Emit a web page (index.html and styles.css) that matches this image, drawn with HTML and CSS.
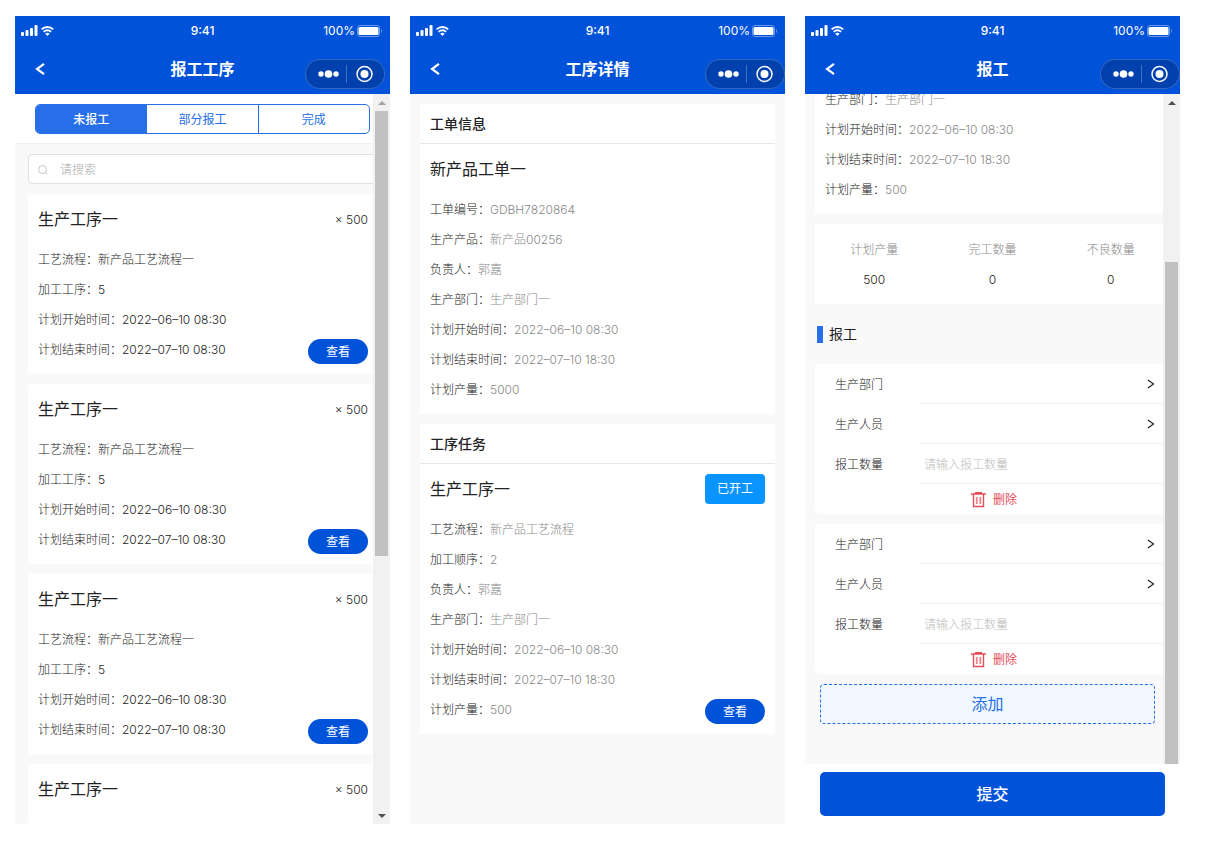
FILE: index.html
```
<!DOCTYPE html>
<html lang="zh-CN">
<head>
    <meta charset="UTF-8">
    <meta name="viewport" content="width=device-width, initial-scale=1.0">
    <title>报工</title>
    <link rel="stylesheet" href="styles.css">
</head>
<body>

    <svg class="sprite" aria-hidden="true">
        <symbol id="signal" viewBox="0 0 34 12">
            <rect x="0" y="7" width="3" height="4" rx="1"/>
            <rect x="4.500" y="5" width="3" height="6" rx="1"/>
            <rect x="9" y="3" width="3" height="8" rx="1"/>
            <rect x="13.500" y="0" width="3" height="11" rx="1"/>
            <g fill="none" stroke="currentColor" stroke-width="1.800">
                <path d="M20.600 4.400a8.200 8.200 0 0 1 11.600 0"/>
                <path d="M22.700 6.800a5.200 5.200 0 0 1 7.400 0"/>
            </g>
            <path d="M24.200 8.700a3.200 3.200 0 0 1 4.400 0L26.400 11z"/>
        </symbol>
        <symbol id="battery" viewBox="0 0 27 12">
            <rect x=".5" y=".5" width="22" height="11" rx="2.500" fill="none" stroke="currentColor" stroke-opacity=".4"/>
            <rect x="1.500" y="2" width="20" height="8" rx="1.500"/>
            <path d="M24 4c1.400.5 1.400 3.500 0 4z" fill-opacity=".4"/>
        </symbol>
        <symbol id="back" viewBox="0 0 10 14">
            <path d="M9 1.800 2 7l7 5.200" fill="none" stroke="currentColor" stroke-width="2.200"/>
        </symbol>
        <symbol id="capsule" viewBox="0 0 80 30">
            <circle cx="16" cy="15" r="2.700"/>
            <circle cx="23.500" cy="15" r="3.800"/>
            <circle cx="31" cy="15" r="2.700"/>
            <path d="M41.500 6v18" stroke="currentColor" stroke-opacity=".25"/>
            <circle cx="59.500" cy="15" r="7.500" fill="none" stroke="currentColor" stroke-width="1.500"/>
            <circle cx="59.500" cy="15" r="4"/>
        </symbol>
        <symbol id="next" viewBox="0 0 8 10">
            <path d="M1 1l5.500 4L1 9" fill="none" stroke="currentColor" stroke-width="1.200"/>
        </symbol>
        <symbol id="trash" viewBox="0 0 15 16">
            <path d="M0 2h15M4 .7h7" fill="none" stroke="currentColor" stroke-width="1.400"/>
            <path d="M2.500 2v12.500h10V2" fill="none" stroke="currentColor" stroke-width="1.400"/>
            <path d="M5.700 5v7M9.300 5v7" fill="none" stroke="currentColor" stroke-opacity=".7" stroke-width="1.800"/>
        </symbol>
    </svg>

    <main class="screens">

        <!-- process list -->
        <section class="phone">
            <header class="top top-inset">
                <div class="status">
                    <svg class="signal"><use href="#signal"/></svg>
                    <span class="clock">9:41</span>
                    <span class="power">100%<svg class="battery"><use href="#battery"/></svg></span>
                </div>
                <div class="nav">
                    <button type="button" class="back" aria-label="返回"><svg><use href="#back"/></svg></button>
                    <h1>报工工序</h1>
                    <button type="button" class="capsule" aria-label="菜单"><svg><use href="#capsule"/></svg></button>
                </div>
            </header>
            <div class="content">
                <div class="tabs-bar">
                    <div class="tabs">
                        <button type="button" class="tab active">未报工</button>
                        <button type="button" class="tab">部分报工</button>
                        <button type="button" class="tab">完成</button>
                    </div>
                </div>
                <div class="list">
                    <label class="search">
                        <svg viewBox="0 0 12 12"><circle cx="5.500" cy="5.500" r="4.800"/><path d="M9 9l2.500 2.500"/></svg>
                        <input type="search" placeholder="请搜索" aria-label="请搜索">
                    </label>
                    <article class="card rounded">
                        <div class="card-title"><h2>生产工序一</h2><span class="count">× 500</span></div>
                        <p>工艺流程：新产品工艺流程一</p>
                        <p>加工工序：5</p>
                        <p>计划开始时间：2022–06–10 08:30</p>
                        <div class="last"><p>计划结束时间：2022–07–10 08:30</p><button type="button" class="view">查看</button></div>
                    </article>
                    <article class="card rounded">
                        <div class="card-title"><h2>生产工序一</h2><span class="count">× 500</span></div>
                        <p>工艺流程：新产品工艺流程一</p>
                        <p>加工工序：5</p>
                        <p>计划开始时间：2022–06–10 08:30</p>
                        <div class="last"><p>计划结束时间：2022–07–10 08:30</p><button type="button" class="view">查看</button></div>
                    </article>
                    <article class="card rounded">
                        <div class="card-title"><h2>生产工序一</h2><span class="count">× 500</span></div>
                        <p>工艺流程：新产品工艺流程一</p>
                        <p>加工工序：5</p>
                        <p>计划开始时间：2022–06–10 08:30</p>
                        <div class="last"><p>计划结束时间：2022–07–10 08:30</p><button type="button" class="view">查看</button></div>
                    </article>
                    <article class="card rounded">
                        <div class="card-title"><h2>生产工序一</h2><span class="count">× 500</span></div>
                    </article>
                </div>
                <div class="scrollbar at-top"><i class="arrow up"></i><i class="thumb"></i><i class="arrow down"></i></div>
            </div>
        </section>

        <!-- process detail -->
        <section class="phone">
            <header class="top">
                <div class="status">
                    <svg class="signal"><use href="#signal"/></svg>
                    <span class="clock">9:41</span>
                    <span class="power">100%<svg class="battery"><use href="#battery"/></svg></span>
                </div>
                <div class="nav">
                    <button type="button" class="back" aria-label="返回"><svg><use href="#back"/></svg></button>
                    <h1>工序详情</h1>
                    <button type="button" class="capsule" aria-label="菜单"><svg><use href="#capsule"/></svg></button>
                </div>
            </header>
            <div class="content detail">
                <article>
                    <h3 class="card-head">工单信息</h3>
                    <div class="card">
                        <div class="card-title"><h2>新产品工单一</h2></div>
                        <p>工单编号：<span>GDBH7820864</span></p>
                        <p>生产产品：<span>新产品00256</span></p>
                        <p>负责人：<span>郭嘉</span></p>
                        <p>生产部门：<span>生产部门一</span></p>
                        <p>计划开始时间：<span>2022–06–10 08:30</span></p>
                        <p>计划结束时间：<span>2022–07–10 18:30</span></p>
                        <p>计划产量：<span>5000</span></p>
                    </div>
                </article>
                <article>
                    <h3 class="card-head">工序任务</h3>
                    <div class="card">
                        <div class="card-title"><h2>生产工序一</h2><span class="badge">已开工</span></div>
                        <p>工艺流程：<span>新产品工艺流程</span></p>
                        <p>加工顺序：<span>2</span></p>
                        <p>负责人：<span>郭嘉</span></p>
                        <p>生产部门：<span>生产部门一</span></p>
                        <p>计划开始时间：<span>2022–06–10 08:30</span></p>
                        <p>计划结束时间：<span>2022–07–10 18:30</span></p>
                        <div class="last"><p>计划产量：<span>500</span></p><button type="button" class="view">查看</button></div>
                    </div>
                </article>
            </div>
        </section>

        <!-- report form -->
        <section class="phone">
            <header class="top">
                <div class="status">
                    <svg class="signal"><use href="#signal"/></svg>
                    <span class="clock">9:41</span>
                    <span class="power">100%<svg class="battery"><use href="#battery"/></svg></span>
                </div>
                <div class="nav">
                    <button type="button" class="back" aria-label="返回"><svg><use href="#back"/></svg></button>
                    <h1>报工</h1>
                    <button type="button" class="capsule" aria-label="菜单"><svg><use href="#capsule"/></svg></button>
                </div>
            </header>
            <form class="report">
                <div class="content">
                    <div class="report-body">
                        <div class="card scrolled">
                            <p>生产部门：<span>生产部门一</span></p>
                            <p>计划开始时间：<span>2022–06–10 08:30</span></p>
                            <p>计划结束时间：<span>2022–07–10 18:30</span></p>
                            <p>计划产量：<span>500</span></p>
                        </div>
                        <dl class="stats">
                            <div><dt>计划产量</dt><dd>500</dd></div>
                            <div><dt>完工数量</dt><dd>0</dd></div>
                            <div><dt>不良数量</dt><dd>0</dd></div>
                        </dl>
                        <h3 class="group-title">报工</h3>
                        <div class="fields">
                            <div class="field">
                                <label for="dept1">生产部门</label>
                                <div class="control"><select id="dept1"><option></option></select><svg class="next"><use href="#next"/></svg></div>
                            </div>
                            <div class="field">
                                <label for="staff1">生产人员</label>
                                <div class="control"><select id="staff1"><option></option></select><svg class="next"><use href="#next"/></svg></div>
                            </div>
                            <div class="field">
                                <label for="qty1">报工数量</label>
                                <div class="control"><input type="text" id="qty1" placeholder="请输入报工数量"></div>
                            </div>
                            <button type="button" class="delete"><svg><use href="#trash"/></svg>删除</button>
                        </div>
                        <div class="fields">
                            <div class="field">
                                <label for="dept2">生产部门</label>
                                <div class="control"><select id="dept2"><option></option></select><svg class="next"><use href="#next"/></svg></div>
                            </div>
                            <div class="field">
                                <label for="staff2">生产人员</label>
                                <div class="control"><select id="staff2"><option></option></select><svg class="next"><use href="#next"/></svg></div>
                            </div>
                            <div class="field">
                                <label for="qty2">报工数量</label>
                                <div class="control"><input type="text" id="qty2" placeholder="请输入报工数量"></div>
                            </div>
                            <button type="button" class="delete"><svg><use href="#trash"/></svg>删除</button>
                        </div>
                        <button type="button" class="add">添加</button>
                    </div>
                    <div class="scrollbar at-bottom"><i class="arrow up"></i><i class="thumb"></i></div>
                </div>
                <div class="footer">
                    <button type="submit" class="submit">提交</button>
                </div>
            </form>
        </section>

    </main>

</body>
</html>
```

FILE: styles.css
```
* {
    box-sizing: border-box;
}
body {
    margin: 0;
    background-color: #fff;
    color: #222;
    font-family: Inter, "Noto Sans CJK SC", sans-serif;
    font-size: 12px;
    font-weight: 300;
    line-height: 30px;
}
h1, h2, h3, p, dl, dd {
    margin: 0;
}
button, input, select {
    font: inherit;
    color: inherit;
    border: none;
    background: none;
    padding: 0;
    margin: 0;
}
button {
    cursor: pointer;
}
svg {
    display: block;
    fill: currentColor;
}
.sprite {
    display: none;
}

.screens {
    display: grid;
    grid-template-columns: repeat(3, 1fr);
    gap: 20px;
    height: 100vh;
    padding: 16px 25px 20px 15px;
}
.phone {
    display: flex;
    flex-direction: column;
    min-height: 0;
    overflow: hidden;
}

/* header */
.top {
    flex: none;
    background-color: #0052d9;
    color: #fff;
}
.status {
    display: grid;
    grid-template-columns: 1fr auto 1fr;
    align-items: center;
    height: 28px;
    padding: 0 6px;
    font-weight: 400;
}
.signal {
    width: 34px;
    height: 12px;
}
.clock {
    font-weight: 500;
}
.power {
    display: flex;
    align-items: center;
    justify-content: flex-end;
    gap: 2px;
}
.battery {
    width: 27px;
    height: 12px;
}
.nav {
    display: grid;
    grid-template-columns: 1fr auto 1fr;
    align-items: center;
    height: 50px;
    padding-left: 20px;
}
.nav h1 {
    padding-right: 20px;
    font-size: 16px;
    font-weight: 700;
}
.back {
    width: 40px;
}
.back svg {
    width: 10px;
    height: 14px;
}
.capsule {
    justify-self: end;
    margin-top: 10px;
    width: 80px;
    height: 30px;
    border: 1px solid rgba(255, 255, 255, 0.2);
    border-radius: 15px;
    background-color: rgba(0, 0, 0, 0.2);
}
.capsule svg {
    width: 80px;
    height: 30px;
    margin: -1px;
}
.top-inset .capsule {
    margin-right: 5px;
}

/* content */
.content {
    position: relative;
    flex: 1;
    min-height: 0;
    overflow: hidden;
    background-color: #f9f9f9;
}
.card {
    padding: 10px 10px 9px;
    background-color: #fff;
}
.rounded {
    border-radius: 4px;
}
.card p span {
    color: #888;
}
.card-title {
    display: flex;
    justify-content: space-between;
    margin-bottom: 11px;
}
.card-title h2 {
    font-size: 16px;
    font-weight: 400;
}
.count {
    height: 30px;
    line-height: 32px;
}
.last {
    display: flex;
    justify-content: space-between;
    align-items: flex-end;
}
.view {
    width: 60px;
    height: 25px;
    margin-bottom: 1px;
    border-radius: 13px;
    background-color: #0052d9;
    color: #fff;
    font-weight: 400;
    line-height: 25px;
}
.badge {
    width: 60px;
    border-radius: 4px;
    background-color: #0a94ff;
    color: #fff;
    font-weight: 400;
    text-align: center;
}

/* tabs and list */
.tabs-bar {
    padding: 10px 20px 9px;
    border-bottom: 1px solid #eee;
    background-color: #fff;
}
.tabs {
    display: flex;
    overflow: hidden;
    border: 1px solid #266fe8;
    border-radius: 5px;
}
.tab {
    flex: 1;
    height: 28px;
    padding-top: 1px;
    color: #266fe8;
    font-weight: 400;
    line-height: 27px;
}
.tab + .tab {
    border-left: 1px solid #266fe8;
}
.tab.active {
    background-color: #266fe8;
    color: #fff;
    font-weight: 500;
}
.list {
    display: flex;
    flex-direction: column;
    gap: 10px;
    padding: 10px 12px 0 13px;
}
.search {
    display: flex;
    align-items: center;
    gap: 12px;
    height: 30px;
    padding: 1px 0 0 9px;
    border: 1px solid #e0e0e0;
    border-radius: 4px;
    background-color: #fff;
}
.search svg {
    width: 10px;
    height: 10px;
    fill: none;
    stroke: #bbb;
}
.search input {
    flex: 1;
    outline: none;
}
::placeholder {
    color: #aaa;
    opacity: 1;
}

/* detail */
.detail {
    display: flex;
    flex-direction: column;
    gap: 10px;
    padding: 10px;
}
.card-head {
    height: 40px;
    padding-left: 10px;
    border-bottom: 1px solid #e7e7e7;
    background-color: #fff;
    font-size: 14px;
    font-weight: 500;
    line-height: 40px;
}

/* report form */
.report {
    display: flex;
    flex-direction: column;
    flex: 1;
    min-height: 0;
}
.report-body {
    padding: 0 10px;
}
.scrolled {
    margin-top: -9px;
    padding-top: 0;
}
.stats {
    display: grid;
    grid-template-columns: repeat(3, 1fr);
    margin-top: 10px;
    padding: 11px 0 9px;
    background-color: #fff;
    text-align: center;
}
.stats dt {
    color: #888;
}
.group-title {
    display: flex;
    align-items: center;
    gap: 6px;
    height: 60px;
    padding-left: 2px;
    font-size: 14px;
    font-weight: 400;
}
.group-title::before {
    content: "";
    width: 6px;
    height: 17px;
    background-color: #266fe8;
}
.fields {
    margin-bottom: 10px;
    padding-left: 20px;
    border-radius: 5px;
    background-color: #fff;
}
.field {
    display: flex;
    height: 40px;
    line-height: 42px;
}
.field label {
    width: 85px;
}
.control {
    display: flex;
    align-items: center;
    flex: 1;
    padding: 1px 15px 0 4px;
    border-bottom: 1px solid #eee;
}
.control select, .control input {
    flex: 1;
    height: 38px;
    padding-top: 2px;
    appearance: none;
    outline: none;
}
.control ::placeholder {
    color: #bbb;
}
.next {
    width: 8px;
    height: 10px;
}
.delete {
    display: flex;
    align-items: center;
    gap: 7px;
    height: 30px;
    margin: 0 auto;
    padding: 2px 17px 0 0;
    color: #e34d59;
    font-weight: 400;
}
.delete svg {
    width: 15px;
    height: 16px;
}
.add {
    display: block;
    width: calc(100% - 20px);
    height: 40px;
    margin-left: 5px;
    border: 1px dashed #266fe8;
    border-radius: 4px;
    background-color: #f0f7ff;
    color: #266fe8;
    font-size: 16px;
    font-weight: 400;
}
.footer {
    padding: 8px 15px;
}
.submit {
    display: block;
    width: 100%;
    height: 44px;
    border-radius: 5px;
    background-color: #0052d9;
    color: #fff;
    font-size: 16px;
    font-weight: 500;
}

/* scrollbars */
.scrollbar {
    position: absolute;
    top: 0;
    right: 0;
    bottom: 0;
    display: flex;
    flex-direction: column;
    width: 17px;
    padding: 0 2px;
    background-color: #f1f1f1;
}
.arrow {
    display: flex;
    align-items: center;
    justify-content: center;
    height: 17px;
}
.arrow::before {
    content: "";
    border: 4px solid transparent;
}
.up::before {
    border-top: none;
    border-bottom-color: #505050;
}
.down::before {
    border-bottom: none;
    border-top-color: #505050;
}
.at-top .up::before {
    border-bottom-color: #a3a3a3;
}
.thumb {
    background-color: #c1c1c1;
}
.at-top .thumb {
    height: 61%;
}
.at-top .down {
    margin-top: auto;
}
.at-bottom .thumb {
    height: 75%;
    margin-top: auto;
}
```
